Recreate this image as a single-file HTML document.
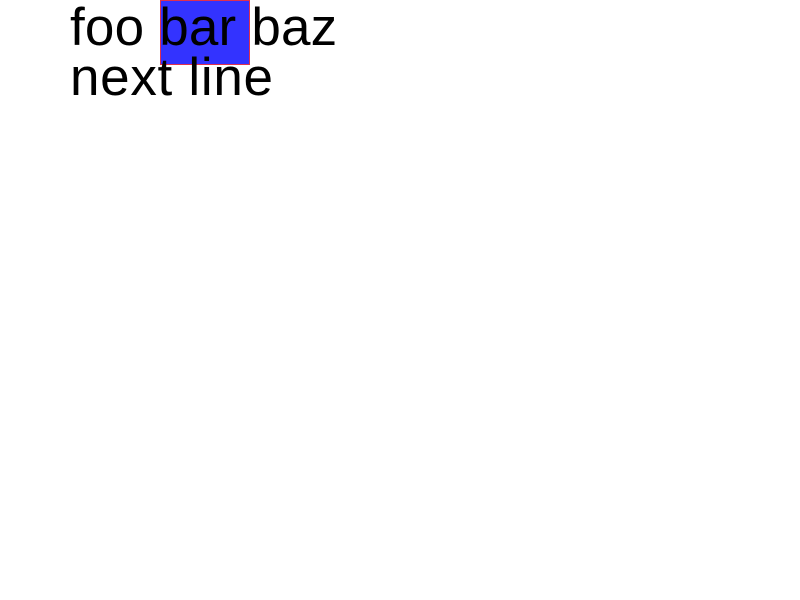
<!DOCTYPE html>
<html><head><meta charset="utf-8"><style>
html,body{margin:0;padding:0;background:#fff;width:800px;height:600px;overflow:hidden}
.box{position:absolute;left:160px;top:0;width:88px;height:63px;background:#3333ff;border:1px solid #e0304f;z-index:0}
.t{position:absolute;left:70px;top:3px;font-family:"Liberation Sans",sans-serif;font-size:53px;line-height:50px;color:#000;z-index:1;white-space:pre}
.l1{letter-spacing:0.2px}
.l2{letter-spacing:0.7px}
</style></head><body>
<div class="box"></div>
<div class="t"><span class="l1">foo bar baz</span>
<span class="l2">next line</span></div>
</body></html>
